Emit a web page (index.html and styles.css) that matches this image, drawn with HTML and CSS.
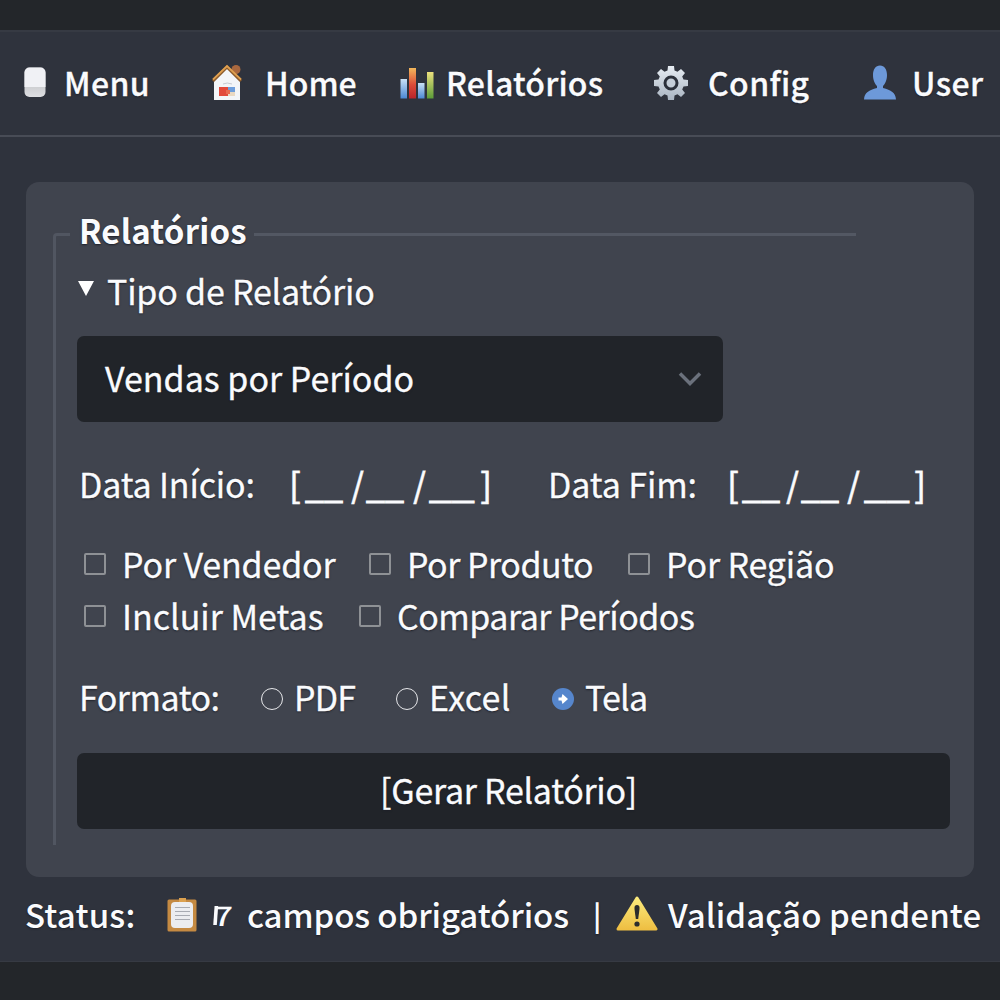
FILE: index.html
```html
<!DOCTYPE html>
<html lang="pt-BR">
<head>
<meta charset="utf-8">
<title>Relatórios</title>
<link rel="stylesheet" href="styles.css">
</head>
<body>
<div class="app">
  <nav class="nav">
    <a class="nav-item"><svg class="ico" width="22" height="31" viewBox="0 0 22 31"><defs><linearGradient id="gm" x1="0" y1="0" x2="0" y2="1"><stop offset="0" stop-color="#aeb0b4"/><stop offset="1" stop-color="#dedfe2"/></linearGradient></defs><rect x=".5" y=".5" width="21" height="29.500" rx="5" fill="url(#gm)"/><path d="M.5 20V5.500a5 5 0 0 1 5-5h11a5 5 0 0 1 5 5V20z" fill="#f0f1f5"/></svg><span class="t menu">Menu</span></a>
    <a class="nav-item"><svg class="ico" width="32" height="37" viewBox="0 0 32 37"><circle cx="25" cy="5.500" r="4.500" fill="#a9683f"/><path d="M3 15 16 3l13 12v21H3z" fill="#f3f5f8"/><path d="M2 17 16 3l14 14" fill="none" stroke="#8b5a2b" stroke-width="3"/><path d="M2 15.500 16 2l14 13.500" fill="none" stroke="#e0a050" stroke-width="1.800"/><path d="M8 23h9v9H8z" fill="#e24a3b"/><path d="M17 23h7v5h-7z" fill="#6f9edb"/><path d="M17 28h7v4h-7z" fill="#ead9c2"/><path d="M15 26h4v4h-4z" fill="#e86a50"/><path d="M12 20q4-2 9 0" fill="none" stroke="#c5cad2"/></svg><span class="t home">Home</span></a>
    <a class="nav-item"><svg class="ico" width="34" height="32" viewBox="0 0 34 32"><defs><linearGradient id="gb" x1="0" y1="0" x2="0" y2="1"><stop offset="0" stop-color="#c9e0f5"/><stop offset="1" stop-color="#4b88d4"/></linearGradient><linearGradient id="gr" x1="0" y1="0" x2="0" y2="1"><stop offset="0" stop-color="#f2b85c"/><stop offset=".55" stop-color="#dc4b38"/><stop offset="1" stop-color="#b9242b"/></linearGradient><linearGradient id="gg" x1="0" y1="0" x2="0" y2="1"><stop offset="0" stop-color="#ece17e"/><stop offset="1" stop-color="#5c9c38"/></linearGradient></defs><path d="M.5 12h6.500v19.500H.5z" fill="url(#gb)"/><path d="M9 1h7v30.500H9z" fill="url(#gr)"/><path d="M18 16h6.500v15.500H18z" fill="url(#gb)"/><path d="M27 5h6.500v26.500H27z" fill="url(#gg)"/></svg><span class="t rel">Relatórios</span></a>
    <a class="nav-item"><svg class="ico" width="34" height="34" viewBox="-17 -17 34 34"><defs><linearGradient id="gc" x1="0" y1="0" x2="0" y2="1"><stop offset="0" stop-color="#e7edf3"/><stop offset="1" stop-color="#a9b4c1"/></linearGradient></defs><path fill="url(#gc)" d="M-3-17H3L3.500-12.500 6.500-11.200 10-14 14-10 11.200-6.500 12.500-3.500 17-3V3L12.500 3.500 11.200 6.500 14 10 10 14 6.500 11.200 3.500 12.500 3 17H-3L-3.500 12.500-6.500 11.200-10 14-14 10-11.200 6.500-12.500 3.500-17 3V-3L-12.500-3.500-11.200-6.500-14-10-10-14-6.500-11.200-3.500-12.500z"/><circle r="6" fill="#c5ced8" stroke="#2b303a" stroke-width="3"/></svg><span class="t config">Config</span></a>
    <a class="nav-item"><svg class="ico" width="34" height="35" viewBox="0 0 34 35"><path fill="#6d99d9" d="M17 .5c4.500 0 7 4 7 9.500s-2 9-4 11v2c8 2 12.500 4.500 13 11.500H1C1.500 27.500 6 25 14 23v-2c-2-2-4-5.500-4-11S12.500.5 17 .5z"/></svg><span class="t user">User</span></a>
  </nav>
  <main class="card">
    <section class="group">
      <header class="legend"><i class="corner"></i><h1 class="t title">Relatórios</h1><i class="rule"></i></header>
      <div class="fields">
        <div class="row type"><i class="tri"></i><span class="t tipo">Tipo de Relatório</span></div>
        <div class="select"><span class="t vendas">Vendas por Período</span><svg width="24" height="16" viewBox="0 0 24 16"><path d="M2 2.500 12 12.500 22 2.500" fill="none" stroke="#6b717c" stroke-width="3.500"/></svg></div>
        <div class="row dates">
          <span class="t lbl1">Data Início:</span>
          <span class="date d1"><b>[</b><u>__</u><b>/</b><u>__</u><b>/</b><u class="wide">__</u><b>]</b></span>
          <span class="t lbl2">Data Fim:</span>
          <span class="date d2"><b>[</b><u>__</u><b>/</b><u>__</u><b>/</b><u class="wide">__</u><b>]</b></span>
        </div>
        <div class="row checks one">
          <label class="opt"><i class="box"></i><span class="t c1">Por Vendedor</span></label>
          <label class="opt"><i class="box"></i><span class="t c2">Por Produto</span></label>
          <label class="opt"><i class="box"></i><span class="t c3">Por Região</span></label>
        </div>
        <div class="row checks two">
          <label class="opt"><i class="box"></i><span class="t c4">Incluir Metas</span></label>
          <label class="opt"><i class="box"></i><span class="t c5">Comparar Períodos</span></label>
        </div>
        <div class="row formats">
          <span class="t fmt">Formato:</span>
          <label class="opt r"><i class="radio"></i><span class="t f1">PDF</span></label>
          <label class="opt r"><i class="radio"></i><span class="t f2">Excel</span></label>
          <label class="opt r"><svg class="on" width="22" height="22" viewBox="0 0 22 22"><circle cx="11" cy="11" r="11" fill="#5686cc"/><path d="M6.500 9.500h3L10.500 6l5.500 5-5.500 5-1-3.500h-3z" fill="#fff"/></svg><span class="t f3">Tela</span></label>
        </div>
        <button class="submit"><span class="t gerar">[Gerar Relatório]</span></button>
      </div>
    </section>
  </main>
  <footer class="status">
    <span class="t st">Status:</span>
    <svg class="clip" width="30" height="34" viewBox="0 0 30 34"><rect x=".5" y="1.500" width="29" height="32" rx="1.500" fill="#c58a42"/><path d="M12 0h7v4h-7z" fill="#dca14f"/><rect x="4" y="4" width="22" height="26" rx="4" fill="#ecedf0"/><path d="M8 9.500h15M8 13.500h15M8 17.500h15M8 21.500h15" stroke="#a8abb2"/></svg>
    <span class="seven">7</span>
    <span class="t campos">campos obrigatórios</span>
    <span class="t bar">|</span>
    <svg class="warn" width="44" height="36" viewBox="0 0 44 36"><defs><linearGradient id="gw" x1="0" y1="0" x2="0" y2="1"><stop offset="0" stop-color="#fbea7c"/><stop offset="1" stop-color="#eebf43"/></linearGradient></defs><path d="M22 2 41 33H3z" fill="url(#gw)" stroke="url(#gw)" stroke-width="3" stroke-linejoin="round"/><path d="M22 9c2 0 2.800 1.500 2.500 4l-1.300 10h-2.400l-1.300-10C19.200 10.500 20 9 22 9z" fill="#2b2c2d"/><circle cx="22" cy="28" r="2.600" fill="#2b2c2d"/></svg>
    <span class="t valid">Validação pendente</span>
  </footer>
</div>
</body>
</html>
```
FILE: styles.css
```css
* { box-sizing: border-box; }
body { margin: 0; height: 1000px; padding-top: 30px; overflow: hidden; background: #23262a; color: #fafbfd; font: 34px/40px "Noto Sans CJK SC", "Noto Sans", sans-serif; }
.app { height: 932px; background: #2f333d; border-top: 2px solid #363a43; border-bottom: 1px solid #363a43; }
.t { white-space: nowrap; text-shadow: 0 1px 2px #1c1f28; }

/* top navigation */
.nav { height: 105px; padding: 0 0 2px 24px; display: grid; grid-template-columns: 187px 189px 254px 209px 137px; align-items: center; border-bottom: 2px solid #484c56; font-size: 32px; font-weight: 500; -webkit-text-stroke: .3px #fafbfd; }
.nav-item { display: grid; grid-template-columns: 40px auto; justify-content: start; align-items: center; }
.nav-item .t { padding-bottom: 2px; }
.nav-item:nth-child(2) { grid-template-columns: 54px auto; }
.nav-item:nth-child(3) { grid-template-columns: 46px auto; }
.nav-item:nth-child(4) { grid-template-columns: 54px auto; }
.nav-item:nth-child(5) { grid-template-columns: 49px auto; }
.menu { letter-spacing: .4px; }
.rel { letter-spacing: .2px; }
.config { letter-spacing: .4px; }
.user { letter-spacing: .4px; }

/* report card */
.card { margin: 45px 26px 0; height: 695px; padding: 30px 24px 32px 27px; border-radius: 13px; background: #40444e; -webkit-text-stroke: .3px #fafbfd; }
.legend { display: flex; height: 44px; width: 803px; }
.corner { width: 17px; height: 23px; align-self: flex-end; border-top: 3px solid #515661; border-left: 3px solid #515661; border-top-left-radius: 4px; }
.title { margin: -2px 7px 0 9px; font-size: 33px; font-weight: 700; letter-spacing: .2px; -webkit-text-stroke: 0; }
.rule { flex: 1; height: 3px; margin-top: 21px; background: #535863; }
.fields { height: 589px; padding: 14px 0 16px 21px; border-left: 3px solid #515661; }
.row { height: 40px; display: flex; align-items: center; padding-left: 2px; }
.row .t, .row .date { padding-top: 2px; }
.tri { border: 8px solid transparent; border-top: 15px solid #fff; border-bottom: 0; margin: -3px 13px 0 -1px; }
.tipo { letter-spacing: -.2px; }
.select { width: 646px; height: 86px; margin-top: 26px; padding: 0 21px 0 28px; border-radius: 7px; background: #212429; display: flex; align-items: center; justify-content: space-between; }
.vendas { padding-bottom: 2px; }
.dates { margin-top: 41px; }
.lbl1 { width: 210px; letter-spacing: -.15px; }
.lbl2 { width: 179px; letter-spacing: -.1px; }
.date { display: grid; grid-template-columns: 16px 46px 15px 47px 16px 51px 12px; width: 203px; margin-right: 56px; }
.d2 { grid-template-columns: 15px 44px 15px 46px 17px 50px 12px; width: 199px; margin-right: 0; }
.date b { font-weight: 500; }
.date u { text-decoration: none; -webkit-text-stroke: 1px #fafbfd; }
.date .wide { transform: scaleX(1.2); transform-origin: left; width: 40px; }
.opt { display: flex; align-items: center; }
.checks { padding-left: 8px; }
.one { margin-top: 40px; }
.two { margin-top: 12px; }
.box { width: 22px; height: 22px; border: 2px solid #8e9195; border-radius: 2px; margin: 2px 15px 0 -1px; }
.opt .box + .t { margin-left: 1px; }
.one .opt:nth-child(1) { width: 285px; }
.one .opt:nth-child(2) { width: 259px; }
.two .opt:nth-child(1) { width: 275px; }
.c1, .c3 { letter-spacing: -.15px; }
.c2, .c5 { letter-spacing: -.5px; }
.formats { margin-top: 41px; }
.fmt { width: 182px; letter-spacing: -.5px; }
.r { width: 135px; }
.r:nth-child(3) { width: 156px; }
.f1, .f3 { letter-spacing: -.8px; }
.f2 { letter-spacing: .3px; }
.radio { width: 22px; height: 22px; border: 1.500px solid #e6e7ea; border-radius: 50%; margin: 6px 11px 0 0; }
.on { margin: 6px 11px 0 0; }
.submit { display: flex; align-items: center; justify-content: center; width: 873px; height: 76px; margin-top: 37px; padding: 0 10px 2px 0; border: 0; border-radius: 7px; background: #212429; color: inherit; font: inherit; }
.gerar { letter-spacing: -.3px; }

/* status line */
.status { display: flex; align-items: center; height: 40px; margin-top: 17px; padding-left: 25px; font-size: 33px; font-weight: 500; }
.st { width: 142px; letter-spacing: .2px; }
.clip { margin-top: 2px; }
.seven { position: relative; margin-left: 17px; width: 33px; padding-top: 2px; font-size: 27px; font-weight: 500; transform: skewX(-4deg) scaleX(1.2); transform-origin: left; }
.seven::before { content: ""; position: absolute; left: 0; top: 13px; width: 2.500px; height: 19px; background: #fafbfd; }
.campos { width: 346px; letter-spacing: -.1px; }
.bar { width: 22px; font-size: 28px; font-weight: 700; }
.warn { margin-right: 9px; }
.valid { letter-spacing: .1px; }
```
